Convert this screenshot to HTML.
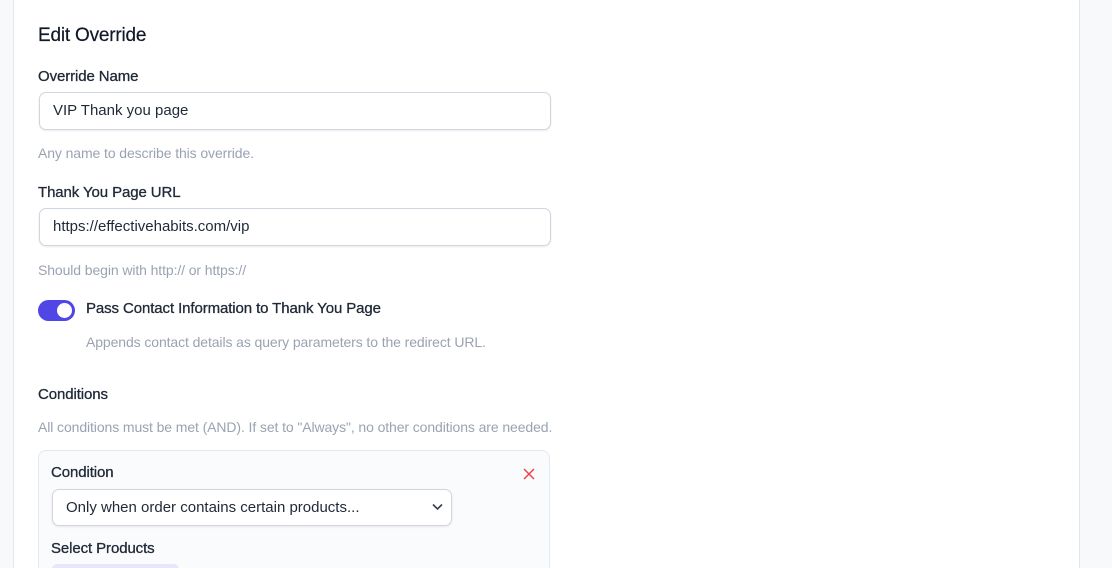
<!DOCTYPE html>
<html style="width:1112px;height:568px;overflow:hidden"><head><style>
*{box-sizing:border-box;margin:0;padding:0}
body{width:1112px;height:568px;background:#f8f9fb;font-family:"Liberation Sans",sans-serif;position:relative;overflow:hidden;color:#1f2937}
.card{position:absolute;left:13px;top:-10px;width:1067px;height:600px;background:#fff;border-left:1px solid #e5e7eb;border-right:1px solid #e2e5ea}
.a{position:absolute;white-space:nowrap}
.t{left:38px;font-size:19px;color:#111827;letter-spacing:-0.2px;-webkit-text-stroke:0.2px #111827}
.l{left:38px;font-size:15px;color:#1f2937;letter-spacing:-0.1px;-webkit-text-stroke:0.3px #1f2937}
.h{left:38px;font-size:14px;color:#9aa3b2;letter-spacing:-0.1px}
.in{position:absolute;left:39px;width:512px;height:38px;border:1px solid #cfd6e0;border-radius:7px;box-shadow:0 1px 2px rgba(0,0,0,.08);font-size:15px;padding-left:13px;line-height:36px;color:#1f2937;background:#fff}
</style></head><body>
<div class="card"></div>
<div class="a t" style="top:25px">Edit Override</div>
<div class="a l" style="top:68px">Override Name</div>
<div class="in" style="top:92px">VIP Thank you page</div>
<div class="a h" style="top:145px">Any name to describe this override.</div>
<div class="a l" style="top:184px">Thank You Page URL</div>
<div class="in" style="top:208px">https://effectivehabits.com/vip</div>
<div class="a h" style="top:262px">Should begin with http:// or https://</div>
<div class="a" style="left:38px;top:300px;width:37px;height:21px;border-radius:11px;background:#4f46e5"><div style="position:absolute;right:3px;top:3px;width:15px;height:15px;border-radius:50%;background:#fff"></div></div>
<div class="a l" style="left:86px;top:300px">Pass Contact Information to Thank You Page</div>
<div class="a h" style="left:86px;top:334px">Appends contact details as query parameters to the redirect URL.</div>
<div class="a l" style="top:386px">Conditions</div>
<div class="a h" style="top:419px">All conditions must be met (AND). If set to "Always", no other conditions are needed.</div>
<div class="a" style="left:38px;top:450px;width:512px;height:140px;border:1px solid #e5e8ee;border-radius:8px;background:#fafbfc"></div>
<div class="a l" style="left:51px;top:464px">Condition</div>
<svg class="a" style="left:523px;top:468px" width="12" height="12" viewBox="0 0 12 12"><path d="M1 1L11 11M11 1L1 11" stroke="#ef4444" stroke-width="1.5"/></svg>
<div class="in" style="left:52px;top:489px;width:400px;height:37px">Only when order contains certain products...</div>
<svg class="a" style="left:432px;top:503px" width="11" height="8" viewBox="0 0 11 8"><path d="M1 1.5L5.5 6L10 1.5" stroke="#374151" stroke-width="1.6" fill="none"/></svg>
<div class="a l" style="left:51px;top:540px">Select Products</div>
<div class="a" style="left:52px;top:564px;width:127px;height:10px;border-radius:5px;background:#e8e6fb"></div>
</body></html>
